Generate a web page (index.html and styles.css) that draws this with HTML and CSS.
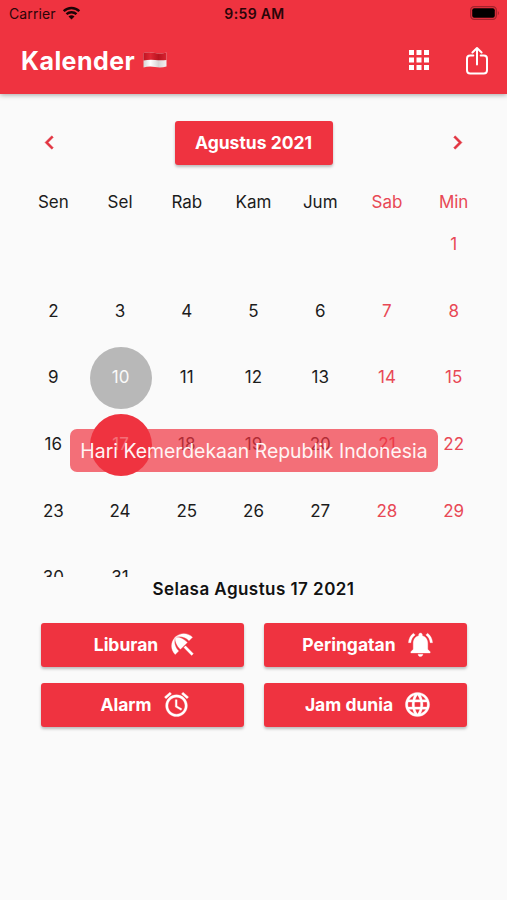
FILE: index.html
```html
<!DOCTYPE html>
<html lang="id">
<head>
   <meta charset="UTF-8">
   <meta name="viewport" content="width=device-width, initial-scale=1.0">
   <title>Kalender</title>
   <link rel="stylesheet" href="styles.css">
</head>
<body>
   <header class="header">
      <div class="status-bar">
         <div class="carrier">
            <span>Carrier</span>
            <svg class="wifi" viewBox="0 0 18 14">
               <path d="M1.2 5.2a11.2 11.2 0 0 1 15.6 0" />
               <path d="M4 8.2a7.2 7.2 0 0 1 10 0" />
               <path class="wifi-dot" d="M9 13.6L6 10.6a4.3 4.3 0 0 1 6 0z" />
            </svg>
         </div>
         <div class="time">9:59 AM</div>
         <div class="battery-box">
            <svg class="battery" viewBox="0 0 30 14">
               <rect class="battery-frame" x=".7" y=".7" width="25.6" height="12.6" rx="3.5" />
               <rect x="2.2" y="2.2" width="22.6" height="9.6" rx="2" />
               <path class="battery-tip" d="M27.8 4.7q2.2 2.3 0 4.6z" />
            </svg>
         </div>
      </div>
      <div class="app-bar">
         <h1 class="title">Kalender</h1>
         <svg class="flag" viewBox="0 0 24 18">
            <defs>
               <linearGradient id="flagRed" x1="0" x2="1" y1="0" y2="0">
                  <stop offset="0" stop-color="#c01523" />
                  <stop offset=".3" stop-color="#e02634" />
                  <stop offset=".65" stop-color="#b91420" />
                  <stop offset="1" stop-color="#d92331" />
               </linearGradient>
               <linearGradient id="flagWhite" x1="0" x2="1" y1="0" y2="0">
                  <stop offset="0" stop-color="#d5d5d5" />
                  <stop offset=".3" stop-color="#ffffff" />
                  <stop offset=".65" stop-color="#d8d4d4" />
                  <stop offset="1" stop-color="#f4f0f0" />
               </linearGradient>
            </defs>
            <path fill="url(#flagWhite)" d="M.5 2Q6 .5 12 2t11.5-.5v14Q18 17 12 16T.5 16.5z" />
            <path fill="url(#flagRed)" d="M.5 2Q6 .5 12 2t11.5-.5v7.5Q18 9.500 12 9T.5 9.500z" />
         </svg>
         <svg class="icon apps" viewBox="0 0 24 24">
            <path d="M4 8h4V4H4v4zm6 12h4v-4h-4v4zm-6 0h4v-4H4v4zm0-6h4v-4H4v4zm6 0h4v-4h-4v4zm6-10v4h4V4h-4zm-6 4h4V4h-4v4zm6 6h4v-4h-4v4zm0 6h4v-4h-4v4z" />
         </svg>
         <svg class="share" viewBox="0 0 24 30">
            <path d="M8.300 9.500H5.200Q2 9.500 2 12.700v11.600q0 3.200 3.200 3.200h13.600q3.200 0 3.200-3.200V12.700q0-3.200-3.200-3.200h-3.100" />
            <path d="M12 18.500V2.200M7.400 6.500L12 2l4.600 4.500" />
         </svg>
      </div>
   </header>

   <main class="calendar">
      <div class="month-row">
         <svg class="icon arrow" viewBox="0 0 24 24"><path d="M15.410 7.410L14 6l-6 6 6 6 1.410-1.410L10.830 12z" /></svg>
         <button class="btn month">Agustus 2021</button>
         <svg class="icon arrow" viewBox="0 0 24 24"><path d="M10 6L8.590 7.410 13.170 12l-4.580 4.590L10 18l6-6z" /></svg>
      </div>
      <div class="week-names">
         <span>Sen</span>
         <span>Sel</span>
         <span>Rab</span>
         <span>Kam</span>
         <span>Jum</span>
         <span class="red">Sab</span>
         <span class="red">Min</span>
      </div>
      <div class="days">
         <span></span><span></span><span></span><span></span><span></span><span></span><span class="red">1</span>
         <span>2</span><span>3</span><span>4</span><span>5</span><span>6</span><span class="red">7</span><span class="red">8</span>
         <span>9</span><span><b class="circle today">10</b></span><span>11</span><span>12</span><span>13</span><span class="red">14</span><span class="red">15</span>
         <span>16</span><span><b class="circle selected">17</b></span><span>18</span><span>19</span><span>20</span><span class="red">21</span><span class="red">22</span>
         <span>23</span><span>24</span><span>25</span><span>26</span><span>27</span><span class="red">28</span><span class="red">29</span>
         <span>30</span><span>31</span>
      </div>
      <div class="toast">Hari Kemerdekaan Republik Indonesia</div>
   </main>

   <div class="selected-date">Selasa Agustus 17 2021</div>

   <div class="actions">
      <button class="btn action">
         <span>Liburan</span>
         <svg class="icon" viewBox="0 0 24 24"><path d="M13.127 14.560l1.430-1.430 6.440 6.443L19.570 21zm4.293-5.730l2.860-2.860c-3.950-3.950-10.350-3.960-14.300-.02 3.930-1.300 8.310-.25 11.440 2.880zM5.950 5.980c-3.940 3.950-3.930 10.350.02 14.300l2.860-2.860C5.700 14.290 4.650 9.910 5.950 5.980zm.02-.02l-.01.01c-.38 3.010 1.170 6.880 4.300 10.020l5.730-5.730c-3.130-3.130-7.010-4.680-10.020-4.300z" /></svg>
      </button>
      <button class="btn action">
         <span>Peringatan</span>
         <svg class="icon" viewBox="0 0 24 24"><path d="M7.580 4.080L6.150 2.650C3.750 4.480 2.170 7.300 2.030 10.500h2c.15-2.650 1.510-4.970 3.550-6.420zm12.390 6.420h2c-.15-3.200-1.730-6.020-4.120-7.850l-1.420 1.430c2.020 1.450 3.390 3.770 3.540 6.420zM18 11c0-3.070-1.640-5.640-4.500-6.320V4c0-.83-.67-1.500-1.500-1.500s-1.500.67-1.500 1.500v.68C7.630 5.360 6 7.920 6 11v5l-2 2v1h16v-1l-2-2v-5zm-6 11c.14 0 .27-.01.4-.04.65-.14 1.180-.58 1.440-1.180.1-.24.15-.5.15-.78h-4c.01 1.100.9 2 2.010 2z" /></svg>
      </button>
      <button class="btn action">
         <span>Alarm</span>
         <svg class="icon" viewBox="0 0 24 24"><path d="M22 5.720l-4.600-3.860-1.290 1.530 4.600 3.860L22 5.720zM7.880 3.390L6.600 1.860 2 5.710l1.290 1.530 4.590-3.850zM12.500 8H11v6l4.750 2.850.75-1.230-4-2.370V8zM12 4c-4.970 0-9 4.030-9 9s4.020 9 9 9c4.970 0 9-4.030 9-9s-4.030-9-9-9zm0 16c-3.870 0-7-3.130-7-7s3.130-7 7-7 7 3.130 7 7-3.130 7-7 7z" /></svg>
      </button>
      <button class="btn action">
         <span>Jam dunia</span>
         <svg class="icon" viewBox="0 0 24 24"><path d="M11.990 2C6.470 2 2 6.480 2 12s4.470 10 9.990 10C17.520 22 22 17.520 22 12S17.520 2 11.990 2zm6.930 6h-2.950c-.32-1.250-.78-2.450-1.380-3.560 1.840.63 3.370 1.910 4.330 3.560zM12 4.040c.83 1.200 1.480 2.530 1.910 3.960h-3.820c.43-1.430 1.080-2.760 1.910-3.960zM4.260 14C4.100 13.360 4 12.690 4 12s.1-1.360.26-2h3.380c-.08.66-.14 1.320-.14 2 0 .68.06 1.340.14 2H4.260zm.82 2h2.950c.32 1.250.78 2.450 1.380 3.560-1.840-.63-3.370-1.900-4.330-3.560zm2.950-8H5.080c.96-1.660 2.490-2.930 4.330-3.560C8.810 5.550 8.350 6.750 8.030 8zM12 19.960c-.83-1.200-1.480-2.530-1.910-3.960h3.820c-.43 1.430-1.080 2.760-1.910 3.960zM14.340 14H9.660c-.09-.66-.16-1.320-.16-2 0-.68.07-1.350.16-2h4.680c.09.65.16 1.320.16 2 0 .68-.07 1.340-.16 2zm.25 5.560c.6-1.110 1.060-2.310 1.380-3.560h2.950c-.96 1.650-2.490 2.930-4.330 3.560zM16.360 14c.08-.66.14-1.320.14-2 0-.68-.06-1.340-.14-2h3.380c.16.64.26 1.310.26 2s-.1 1.360-.26 2h-3.380z" /></svg>
      </button>
   </div>
</body>
</html>
```
FILE: styles.css
```css
* {
   box-sizing: border-box;
}
body {
   margin: 0;
   min-height: 900px;
   overflow: hidden;
   font-family: Inter, "Liberation Sans", sans-serif;
   background: #fafafa;
   color: #1c1c1c;
}
.header {
   height: 94px;
   background: #ef3340;
   box-shadow: 0 1px 5px rgba(0, 0, 0, .35);
}
.status-bar {
   display: grid;
   grid-template-columns: 1fr auto 1fr;
   align-items: center;
   height: 27px;
   padding: 0 7px 0 9px;
   font-size: 14px;
   color: #2a0508;
}
.carrier {
   display: flex;
   align-items: center;
   gap: 6px;
   letter-spacing: .1px;
}
.wifi {
   width: 19px;
   height: 14px;
   margin-top: -2px;
   fill: none;
   stroke: #1c0406;
   stroke-width: 2.4;
}
.wifi .wifi-dot {
   fill: #1c0406;
   stroke: none;
}
.time {
   font-weight: 600;
   letter-spacing: .35px;
}
.battery-box {
   display: flex;
   justify-content: flex-end;
}
.battery {
   width: 30px;
   height: 14px;
   margin-top: -1px;
}
.battery-frame {
   fill: none;
   stroke: #a3222c;
   stroke-width: 1.3;
}
.battery-tip {
   fill: #a3222c;
}
.app-bar {
   display: flex;
   align-items: center;
   height: 67px;
   padding: 0 18px 0 21px;
}
.title {
   margin: 0;
   font-size: 25px;
   font-weight: 700;
   letter-spacing: .45px;
   color: white;
}
.flag {
   width: 24px;
   height: 18px;
   margin-left: 8px;
   margin-top: -2px;
}
.icon {
   width: 30px;
   height: 30px;
   fill: white;
   flex: none;
}
.apps {
   margin-left: auto;
   margin-right: 31px;
   margin-top: -1px;
}
.share {
   width: 24px;
   height: 30px;
   fill: none;
   stroke: white;
   stroke-width: 2;
   stroke-linecap: round;
   stroke-linejoin: round;
}
.calendar {
   position: relative;
   height: 483px;
   padding: 27px 20px 0;
}
.month-row {
   display: flex;
   align-items: center;
   justify-content: space-between;
   padding: 0 16px;
}
.icon.arrow {
   width: 27px;
   height: 27px;
   margin-top: -1px;
   fill: #e23440;
   stroke: #e23440;
   stroke-width: .4;
}
.btn {
   display: flex;
   align-items: center;
   justify-content: center;
   height: 44px;
   border: none;
   border-radius: 3px;
   background: #ef3340;
   box-shadow: 0 2px 3px rgba(0, 0, 0, .25);
   font-family: inherit;
   font-size: 17.5px;
   font-weight: 700;
   color: white;
}
.month {
   width: 158px;
   padding: 0 0 2px;
}
.week-names {
   display: grid;
   grid-template-columns: repeat(7, 1fr);
   height: 46px;
   padding-top: 26px;
   line-height: 22px;
   font-size: 17px;
   text-align: center;
}
.days {
   display: grid;
   grid-template-columns: repeat(7, 1fr);
   grid-auto-rows: 66.6px;
   height: 366px;
   overflow: hidden;
   font-size: 17px;
}
.days span {
   display: flex;
   align-items: center;
   justify-content: center;
}
.red {
   color: #e84855;
}
.circle {
   display: flex;
   align-items: center;
   justify-content: center;
   width: 62px;
   height: 62px;
   margin: 1px 0 0 1px;
   padding-bottom: 1px;
   border-radius: 50%;
   font-weight: 400;
   color: #fafafa;
}
.today {
   background: #b8b8b8;
}
.selected {
   background: #ef3340;
}
.toast {
   position: absolute;
   left: 70px;
   top: 335px;
   width: 368px;
   height: 43px;
   border-radius: 7px;
   background: rgba(239, 51, 64, .7);
   line-height: 44px;
   font-size: 19.4px;
   text-align: center;
   white-space: nowrap;
   color: #fff4f4;
}
.selected-date {
   height: 46px;
   line-height: 24px;
   font-size: 17px;
   font-weight: 600;
   letter-spacing: .45px;
   text-align: center;
   color: #111;
}
.actions {
   display: grid;
   grid-template-columns: 1fr 1fr;
   gap: 16px 20px;
   padding: 0 40px 0 41px;
}
.action {
   gap: 10px;
   padding: 0 0 2px 6px;
}
.action .icon {
   width: 29px;
   height: 29px;
   margin-top: 1px;
   stroke: white;
   stroke-width: .25;
}
```
